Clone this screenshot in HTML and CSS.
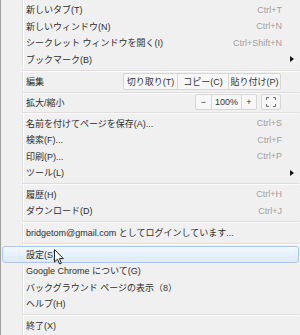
FILE: index.html
```html
<!DOCTYPE html>
<html>
<head>
    <title>Chrome menu</title>
    <link rel="stylesheet" href="styles.css">
</head>
<body>
    <div class="menu">
        <div class="item top"><span class="label">新しいタブ(T)</span><span class="key">Ctrl+T</span></div>
        <div class="item"><span class="label">新しいウィンドウ(N)</span><span class="key">Ctrl+N</span></div>
        <div class="item"><span class="label">シークレット ウィンドウを開く(I)</span><span class="key">Ctrl+Shift+N</span></div>
        <div class="item"><span class="label">ブックマーク(B)</span><span class="arrow"></span></div>
        <div class="sep"></div>

        <!-- edit row -->
        <div class="item edit-row">
            <span class="label">編集</span>
            <div class="btn-group">
                <span class="btn cut">切り取り(T)</span>
                <span class="btn copy">コピー(C)</span>
                <span class="btn paste">貼り付け(P)</span>
            </div>
        </div>
        <div class="sep"></div>

        <!-- zoom row -->
        <div class="item zoom-row">
            <span class="label">拡大/縮小</span>
            <div class="btn-group small">
                <span class="btn step">−</span>
                <span class="btn level">100%</span>
                <span class="btn step">+</span>
            </div>
            <span class="btn full">
                <svg width="10" height="10" viewBox="0 0 10 10">
                    <path d="M0.5 3V0.5H3 M7 0.5H9.5V3 M9.5 7V9.5H7 M3 9.5H0.5V7" fill="none" stroke="#6a6a6a" stroke-width="1"/>
                </svg>
            </span>
        </div>
        <div class="sep"></div>

        <div class="item"><span class="label">名前を付けてページを保存(A)...</span><span class="key">Ctrl+S</span></div>
        <div class="item"><span class="label">検索(F)...</span><span class="key">Ctrl+F</span></div>
        <div class="item"><span class="label">印刷(P)...</span><span class="key">Ctrl+P</span></div>
        <div class="item"><span class="label">ツール(L)</span><span class="arrow"></span></div>
        <div class="sep"></div>

        <div class="item"><span class="label">履歴(H)</span><span class="key">Ctrl+H</span></div>
        <div class="item"><span class="label">ダウンロード(D)</span><span class="key">Ctrl+J</span></div>
        <div class="sep"></div>

        <div class="item"><span class="label">bridgetom@gmail.com としてログインしています...</span></div>
        <div class="sep"></div>

        <div class="item hover"><span class="label">設定(S)</span></div>
        <div class="item"><span class="label">Google Chrome について(G)</span></div>
        <div class="item"><span class="label">バックグラウンド ページの表示（8）</span></div>
        <div class="item"><span class="label">ヘルプ(H)</span></div>
        <div class="sep"></div>

        <div class="item"><span class="label">終了(X)</span></div>

        <!-- mouse pointer over the settings row -->
        <svg class="cursor" width="11" height="17" viewBox="0 0 11 17">
            <path d="M0.5 0.5 L0.5 13 L3.5 10.2 L5.6 15 L7.4 14.2 L5.4 9.6 L9.3 9.6 Z" fill="#ffffff" stroke="#222222" stroke-width="1" stroke-linejoin="round"/>
        </svg>
    </div>
</body>
</html>
```

FILE: styles.css
```css
body {
    margin: 0;
    background-color: #f0f0f0;
    font-family: "Liberation Sans", "Noto Sans CJK JP", sans-serif;
    font-size: 9px;
    color: #2e2e2e;
}
.menu {
    position: relative;
    width: 299px;
    height: 335px;
    padding-top: 1.5px;
    box-sizing: border-box;
    border-left: 1px solid #a0a0a0;
    background: linear-gradient(to right, #f0f0f0 21px, #e2e3e3 21px, #e2e3e3 22px, #fcfcfc 22px, #fcfcfc 23px, #f0f0f0 23px);
}
.item {
    display: flex;
    align-items: center;
    height: 16.5px;
    padding: 0 5px 0 25px;
    white-space: nowrap;
}
.label {
    flex: 1;
}
.key {
    color: #a0a0a0;
    margin-right: 12px;
}
.arrow {
    width: 0;
    height: 0;
    border-left: 4px solid #111111;
    border-top: 3px solid transparent;
    border-bottom: 3px solid transparent;
}
.sep {
    margin: 2px 0 1px 21px;
    height: 0;
    border-top: 1px solid #dedede;
    border-bottom: 1px solid #fcfcfc;
}

/* edit and zoom rows */
.edit-row {
    height: 17px;
}
.zoom-row {
    height: 15.5px;
}
.btn-group {
    display: flex;
    margin-right: 13px;
    border: 1px solid #d6d6d6;
    border-radius: 2px;
    background-color: #f7f7f7;
}
.btn {
    display: flex;
    align-items: center;
    justify-content: center;
    height: 15px;
    color: #333333;
    box-sizing: border-box;
}
.btn + .btn {
    border-left: 1px solid #d6d6d6;
}
.cut {
    width: 53px;
}
.copy {
    width: 51px;
}
.paste {
    width: 52px;
}
.btn-group.small {
    margin-right: 4px;
}
.small .btn {
    height: 14px;
}
.step {
    width: 15px;
}
.level {
    width: 30px;
}
.full {
    width: 20px;
    height: 16px;
    margin-right: 13px;
    border: 1px solid #d6d6d6;
    border-radius: 2px;
    background-color: #f7f7f7;
}

/* highlighted row */
.hover {
    margin-left: 1px;
    padding-left: 23px;
    border: 1px solid #a9c8ec;
    border-radius: 3px;
    background: linear-gradient(to bottom, #f3f8fe, #dce9f8);
    box-sizing: border-box;
    height: 17px;
}
.cursor {
    position: absolute;
    left: 53px;
    top: 249px;
}
```
